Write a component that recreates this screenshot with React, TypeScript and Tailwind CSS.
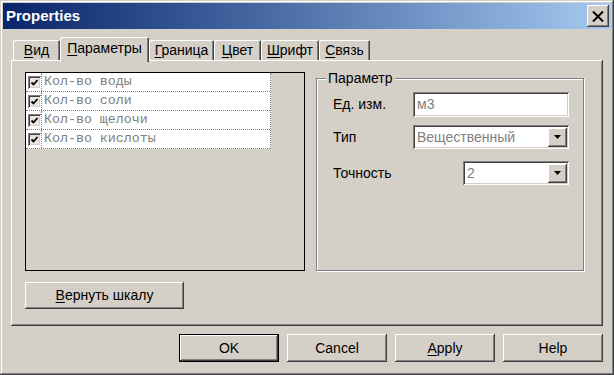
import React from "react"

const raised = "shadow-[inset_-1px_-1px_#404040,inset_1px_1px_#ffffff,inset_-2px_-2px_#808080]"
const sunken = "shadow-[inset_1px_1px_#808080,inset_-1px_-1px_#ffffff,inset_2px_2px_#404040,inset_-2px_-2px_#d4d0c8]"

type Tab = { label: string; width: string; active?: boolean }

const tabs: Tab[] = [
  { label: "Вид", width: "w-[47px]" },
  { label: "Параметры", width: "w-[89px]", active: true },
  { label: "Граница", width: "w-[65px]" },
  { label: "Цвет", width: "w-[47px]" },
  { label: "Шрифт", width: "w-[58px]" },
  { label: "Связь", width: "w-[51px]" },
]

const items = ["Кол-во воды", "Кол-во соли", "Кол-во щелочи", "Кол-во кислоты"]

function Mnemonic({ text }: { text: string }) {
  return <span><span className="underline underline-offset-2">{text[0]}</span>{text.slice(1)}</span>
}

function Arrow() {
  return (
    <div className={`w-[19px] h-[19px] bg-[#d4d0c8] ${raised} flex items-center justify-center`}>
      <svg width="7" height="4" viewBox="0 0 7 4"><path d="M0 0h7L3.5 4z" fill="#000" /></svg>
    </div>
  )
}

function CheckBox() {
  return (
    <div className={`w-[13px] h-[13px] bg-[#e8e6e1] ${sunken} flex items-center justify-center`}>
      <svg width="9" height="9" viewBox="0 0 9 9">
        <path d="M1.5 4.5l2 2l4-4.5" stroke="#000" strokeWidth="1.8" fill="none" />
      </svg>
    </div>
  )
}

function Button({ children, isDefault }: { children: React.ReactNode; isDefault?: boolean }) {
  return (
    <div className={`w-[100px] h-[28px] ${isDefault ? "border border-black" : ""}`}>
      <div className={`w-full h-full ${raised} flex items-center justify-center text-[14px] text-black`}>
        {children}
      </div>
    </div>
  )
}

export default function App() {
  return (
    <div className="w-[614px] h-[375px] bg-[#d4d0c8] p-[3px] flex flex-col font-['Liberation_Sans',Arial,sans-serif] shadow-[inset_-1px_-1px_#404040,inset_1px_1px_#d4d0c8,inset_-2px_-2px_#808080,inset_2px_2px_#ffffff]">
      {/* title bar */}
      <div className="h-[26px] bg-linear-to-r from-[#0a246a] to-[#a6caf0] flex items-center justify-between pl-[3px] pr-[2px]">
        <span className="text-white font-bold text-[15px]">Properties</span>
        <div className={`w-[22px] h-[22px] bg-[#d4d0c8] ${raised} flex items-center justify-center`}>
          <svg width="12" height="11" viewBox="0 0 12 11">
            <path d="M1 0.5l10 10M11 0.5l-10 10" stroke="#000" strokeWidth="2" />
          </svg>
        </div>
      </div>

      <div className="mx-[8px] mt-[8px] flex flex-col">
        {/* tabs */}
        <div className="h-[23px] flex items-end pl-[2px] relative z-10">
          {tabs.map((t) => (
            <div
              key={t.label}
              className={`${t.width} ${t.active ? "h-[25px] -mb-[2px] pb-[3px]" : "h-[20px] pt-[1px]"} bg-[#d4d0c8] rounded-t-[2px] shadow-[inset_1px_1px_#ffffff,inset_-1px_0_#404040,inset_-2px_0_#808080] flex items-center justify-center text-[14px] text-black`}
            >
              <Mnemonic text={t.label} />
            </div>
          ))}
        </div>

        {/* panel */}
        <div className={`h-[266px] ${raised} pl-[14px] pt-[12px] flex`}>
          <div className="flex flex-col">
            <div className="w-[280px] h-[199px] border border-black p-0">
              <div className="w-[245px] bg-white border-r border-dotted border-[#808080]">
                {items.map((it) => (
                  <div key={it} className="h-[19px] flex border-b border-dotted border-[#808080]">
                    <div className="w-[16px] pl-[2px] flex items-center border-r border-dotted border-[#808080]">
                      <CheckBox />
                    </div>
                    <div className="pl-[2px] flex items-center text-[13.3px] text-[#808080] font-['Liberation_Mono','Courier_New',monospace]">
                      {it}
                    </div>
                  </div>
                ))}
              </div>
            </div>
            <div className={`mt-[11px] w-[159px] h-[27px] ${raised} flex items-center justify-center text-[14px] text-black`}>
              <Mnemonic text="Вернуть шкалу" />
            </div>
          </div>

          <fieldset className="ml-[11px] -mt-[2px] w-[268px] h-[201px] border border-[#808080] shadow-[inset_1px_1px_#ffffff,1px_1px_#ffffff] pl-[16px] pr-[14px]">
            <legend className="ml-[-7px] px-[2px] text-[14px] text-black bg-[#d4d0c8] leading-[16px]">Параметр</legend>
            <div className="mt-[6px] h-[25px] flex items-center text-[14px] text-black">
              <span className="w-[80px]">Ед. изм.</span>
              <div className={`w-[156px] h-[25px] bg-white ${sunken} flex items-center pl-[4px] text-[14px] text-[#808080]`}>м3</div>
            </div>
            <div className="mt-[8px] h-[24px] flex items-center text-[14px] text-black">
              <span className="w-[80px]">Тип</span>
              <div className={`w-[156px] h-[24px] bg-white ${sunken} flex items-center justify-between pl-[4px] pr-[2px] text-[14px] text-[#808080]`}>
                <span>Вещественный</span>
                <Arrow />
              </div>
            </div>
            <div className="mt-[12px] h-[24px] flex items-center text-[14px] text-black">
              <span className="w-[130px]">Точность</span>
              <div className={`w-[106px] h-[24px] bg-white ${sunken} flex items-center justify-between pl-[4px] pr-[2px] text-[14px] text-[#808080]`}>
                <span>2</span>
                <Arrow />
              </div>
            </div>
          </fieldset>
        </div>

        {/* buttons */}
        <div className="mt-[8px] flex justify-end gap-[8px]">
          <Button isDefault>OK</Button>
          <Button>Cancel</Button>
          <Button><Mnemonic text="Apply" /></Button>
          <Button>Help</Button>
        </div>
      </div>
    </div>
  )
}
